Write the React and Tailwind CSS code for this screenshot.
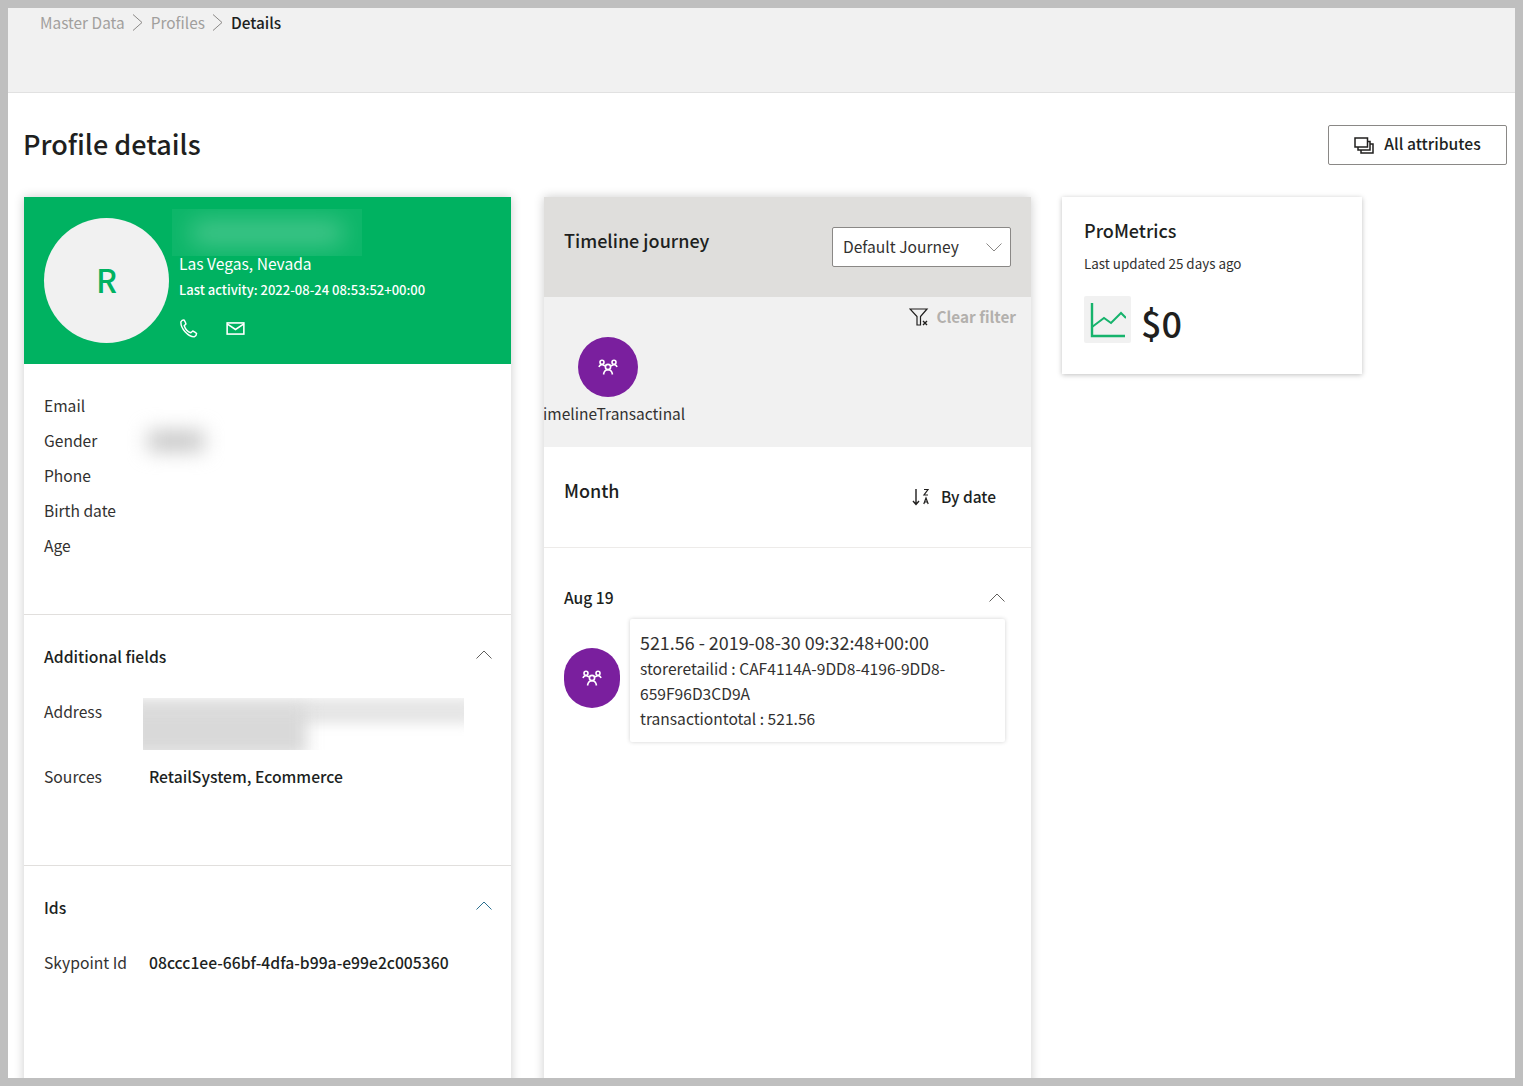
import React from "react";

const ChevronUp = ({ className = "" }) => (
  <svg viewBox="0 0 16 9" className={`w-4 h-[9px] ${className}`} fill="none" stroke="currentColor" strokeWidth="1">
    <path d="M0.5 8.5 L8 1 L15.5 8.5" />
  </svg>
);

const BreadcrumbArrow = () => (
  <svg viewBox="0 0 11 17" className="w-[11px] h-[17px] mt-1" fill="none" stroke="#8a8886" strokeWidth="1">
    <path d="M1 0.5 L10 8.5 L1 16.5" />
  </svg>
);

const GroupIcon = ({ className = "" }) => (
  <svg viewBox="0 0 20 16" className={className} fill="none" stroke="white" strokeWidth="1.6">
    <circle cx="4" cy="3.2" r="2" />
    <circle cx="16" cy="3.2" r="2" />
    <circle cx="10" cy="8" r="2.6" />
    <path d="M1 8 C1.5 6 3 5.5 4.5 5.8 L7.5 7" />
    <path d="M19 8 C18.5 6 17 5.5 15.5 5.8 L12.5 7" />
    <path d="M5.5 15.5 C6 12.5 8 10.8 10 10.8 C12 10.8 14 12.5 14.5 15.5" />
  </svg>
);

const Row = ({ label, children }) => (
  <div className="grid grid-cols-[105px_1fr] h-[35px] items-center text-[15.6px] text-[#323130]">
    <span>{label}</span>
    <span>{children}</span>
  </div>
);

const App = () => {
  return (
    <div className="h-[1086px] border-8 border-[#bfbfbf] bg-white overflow-hidden text-[#201f1e] font-['Noto_Sans_CJK_JP','Noto_Sans',sans-serif]">
      <div className="h-[85px] bg-[#f1f1f1] border-b border-[#e1e1e1] pl-8 pt-[2px] flex items-start gap-[7.5px] text-[15.4px] leading-[24px]">
        <span className="text-[#a19f9d]">Master Data</span>
        <BreadcrumbArrow />
        <span className="text-[#a19f9d]">Profiles</span>
        <BreadcrumbArrow />
        <span className="font-medium text-[#201f1e]">Details</span>
      </div>

      <div className="flex items-center justify-between pl-[15px] pr-2 pt-[32px] h-[72px]">
        <h1 className="text-[27px] font-medium leading-[40px] -mt-[2px]">Profile details</h1>
        <button className="w-[179px] h-[40px] border border-[#8a8886] rounded-[2px] bg-white flex items-center justify-center gap-[10px] text-[15.7px] font-medium pb-[2px]">
          <svg viewBox="0 0 20 17" className="w-5 h-[17px] mt-[2px]" fill="none" stroke="#201f1e" strokeWidth="1.5">
            <rect x="1" y="1" width="12.5" height="9" />
            <path d="M4 10 V13 H16 V4.5 H13.5" />
            <path d="M16 7 H19 V16 H7 V13" />
          </svg>
          All attributes
        </button>
      </div>

      <div className="flex items-start pl-4 mt-[32px]">
        {/* profile card */}
        <div className="w-[487px] h-[900px] shrink-0 bg-white shadow-[0_0_10px_rgba(0,0,0,0.2)]">
          <div className="h-[167px] bg-[#00b261] flex pl-5 pt-[21px] text-white">
            <div className="w-[125px] h-[125px] rounded-full bg-[#f1f1f1] flex items-center justify-center text-[#00b261] text-[32px] font-medium pb-1">
              R
            </div>
            <div className="ml-[3px] -mt-[9px]">
              <div className="w-[190px] h-[47px] bg-white/5 overflow-hidden flex items-center justify-center">
                <div className="w-[150px] h-[22px] bg-white/25 blur-md"></div>
              </div>
              <div className="pl-[7px] -mt-[2px] text-[15.6px] leading-[18px]">Las Vegas, Nevada</div>
              <div className="pl-[7px] mt-[9px] text-[13px] font-medium leading-[18px]">
                Last activity: 2022-08-24 08:53:52+00:00
              </div>
              <div className="pl-[7px] mt-[20px] flex items-center gap-[28px]">
                <svg viewBox="0 0 20 20" className="w-[19px] h-[19px]" fill="none" stroke="white" strokeWidth="1.5">
                  <path d="M2 3 C3 1.5 4.5 1 5.5 1.2 C6.3 2.5 7 4 7.3 5.3 L5.5 7 C6.5 10 9.5 13.5 12.5 14.5 L14.5 12.6 C16 13.2 17.5 14.2 18.5 15.3 C18.5 16.8 17.5 18.2 16 18.8 C9.5 18.5 1.5 10 2 3 Z" />
                </svg>
                <svg viewBox="0 0 20 14" className="w-[19px] h-[13px]" fill="none" stroke="white" strokeWidth="1.7">
                  <rect x="1" y="1" width="18" height="12" />
                  <path d="M1 2 L10 8 L19 2" />
                </svg>
              </div>
            </div>
          </div>

          <div className="h-[251px] border-b border-[#e1dfdd] pl-5 pt-[24px]">
            <Row label="Email" />
            <Row label="Gender">
              <div className="w-[56px] h-[20px] bg-[#c4c4c4] blur-[10px] -ml-[1px]"></div>
            </Row>
            <Row label="Phone" />
            <Row label="Birth date" />
            <Row label="Age" />
          </div>

          <div className="h-[251px] border-b border-[#e1dfdd] pl-5 pr-[19px] pt-[30px]">
            <div className="flex items-center justify-between h-[24px]">
              <span className="text-[15.7px] font-medium">Additional fields</span>
              <ChevronUp className="text-[#605e5c] -mt-[6px]" />
            </div>
            <div className="flex mt-[29px] text-[15.6px]">
              <span className="w-[99px] text-[#323130] mt-[1px] leading-[24px]">Address</span>
              <div className="w-[321px] h-[52px] bg-white overflow-hidden">
                <div className="-ml-4 w-[345px] h-[26px] bg-[#e6e6e6] blur-[6px]"></div>
                <div className="-ml-4 -mt-[18px] w-[180px] h-[50px] bg-[#d9d9d9] blur-[8px]"></div>
              </div>
            </div>
            <div className="flex mt-[15px] text-[15.7px] leading-[24px]">
              <span className="w-[105px] text-[#323130]">Sources</span>
              <span className="font-medium">RetailSystem, Ecommerce</span>
            </div>
          </div>

          <div className="pl-5 pr-[19px] pt-[30px]">
            <div className="flex items-center justify-between h-[24px]">
              <span className="text-[15.7px] font-medium">Ids</span>
              <ChevronUp className="text-[#2b6f8f] -mt-[6px]" />
            </div>
            <div className="flex mt-[31px] text-[15.7px] leading-[24px]">
              <span className="w-[105px] text-[#323130]">Skypoint Id</span>
              <span className="font-medium">08ccc1ee-66bf-4dfa-b99a-e99e2c005360</span>
            </div>
          </div>
        </div>

        {/* timeline card */}
        <div className="w-[487px] h-[900px] shrink-0 ml-[33px] bg-white overflow-hidden shadow-[0_0_10px_rgba(0,0,0,0.2)]">
          <div className="h-[100px] bg-[#dfdedc] flex justify-between pl-5 pr-5">
            <span className="text-[18px] font-medium leading-[28px] mt-[29px]">Timeline journey</span>
            <div className="w-[179px] h-[40px] mt-[30px] bg-white border border-[#8a8886] rounded-[2px] flex items-center justify-between pl-[10px] pr-[8px] text-[15.6px] text-[#323130]">
              Default Journey
              <svg viewBox="0 0 16 9" className="w-4 h-[9px]" fill="none" stroke="#8a8886" strokeWidth="1">
                <path d="M0.5 0.5 L8 8 L15.5 0.5" />
              </svg>
            </div>
          </div>
          <div className="h-[150px] bg-[#f1f1f1]">
            <div className="flex justify-end items-center gap-[7px] h-[24px] pr-[15px] translate-y-[8px]">
              <svg viewBox="0 0 20 18" className="w-5 h-[18px]" fill="none" stroke="#201f1e" strokeWidth="1.2">
                <path d="M1 1 H18 L11.5 8.5 V17 H8 V8.5 Z" />
                <path d="M14 13 L18 17 M18 13 L14 17" strokeWidth="1.4" />
              </svg>
              <span className="text-[15.3px] font-semibold text-[#b3b0ad] -translate-y-px">Clear filter</span>
            </div>
            <div className="w-[60px] h-[60px] mt-[16px] ml-[34px] rounded-full bg-[#7a1f9e] flex items-center justify-center">
              <GroupIcon className="w-5 h-4" />
            </div>
            <div className="w-[123px] ml-[4px] mt-[6px] flex justify-center text-[15.5px] leading-[20px] whitespace-nowrap text-[#323130]">
              TimelineTransactinal
            </div>
          </div>
          <div className="h-[101px] border-b border-[#edebe9] flex justify-between pl-5 pr-[35px]">
            <span className="text-[18px] font-medium leading-[26px] mt-[30px]">Month</span>
            <span className="flex items-center gap-[11px] h-[24px] mt-[38px] text-[15.5px] font-medium">
              <svg viewBox="0 0 18 18" className="w-[18px] h-[18px]" fill="none" stroke="#201f1e" strokeWidth="1.4">
                <path d="M4 1 V16 M1 13 L4 16.5 L7 13" />
                <path d="M12 1.5 H16 L12 7 H16" strokeWidth="1.2" />
                <path d="M11.8 16 L14 10 L16.2 16 M12.6 14 H15.4" strokeWidth="1.2" />
              </svg>
              By date
            </span>
          </div>
          <div className="pl-5 pr-[26px] pt-[38px]">
            <div className="flex items-center justify-between h-[24px]">
              <span className="text-[15.6px] font-medium">Aug 19</span>
              <ChevronUp className="text-[#605e5c] -mt-[2px]" />
            </div>
            <div className="flex items-start mt-[9px]">
              <div className="w-[56px] h-[60px] mt-[29px] rounded-full bg-[#7a1f9e] flex items-center justify-center shrink-0">
                <GroupIcon className="w-5 h-4" />
              </div>
              <div className="w-[375px] h-[123px] ml-[10px] bg-white rounded-[2px] shadow-[0_0_4px_rgba(0,0,0,0.18)] pl-[10px] pt-[12px] text-[15.6px] leading-[25px] text-[#323130]">
                <div className="text-[17.9px] leading-[25px] -translate-y-px">521.56 - 2019-08-30 09:32:48+00:00</div>
                <div className="w-[320px]">storeretailid : CAF4114A-9DD8-4196-9DD8-659F96D3CD9A</div>
                <div>transactiontotal : 521.56</div>
              </div>
            </div>
          </div>
        </div>

        {/* metrics card */}
        <div className="w-[300px] h-[177px] shrink-0 ml-[31px] bg-white shadow-[0_1px_5px_rgba(0,0,0,0.25)] pl-[22px] pt-[20px]">
          <div className="text-[18px] font-medium leading-[26px]">ProMetrics</div>
          <div className="text-[13.4px] leading-[20px] mt-[10px] text-[#323130]">Last updated 25 days ago</div>
          <div className="flex items-center mt-[23px] gap-[10px]">
            <div className="w-[47px] h-[47px] bg-[#f1f1f1] rounded-[2px] flex items-center justify-center">
              <svg viewBox="0 0 36 36" className="w-[36px] h-[36px]" fill="none" stroke="#16b36c" strokeWidth="2.4">
                <path d="M2 1 V34 H35" />
                <path d="M2 25 L14 16 L21 21 L31 11 L36 16" strokeWidth="2" />
              </svg>
            </div>
            <span className="text-[36px] leading-[47px] font-medium translate-y-[3px]">$0</span>
          </div>
        </div>
      </div>
    </div>
  );
};

export default App;
